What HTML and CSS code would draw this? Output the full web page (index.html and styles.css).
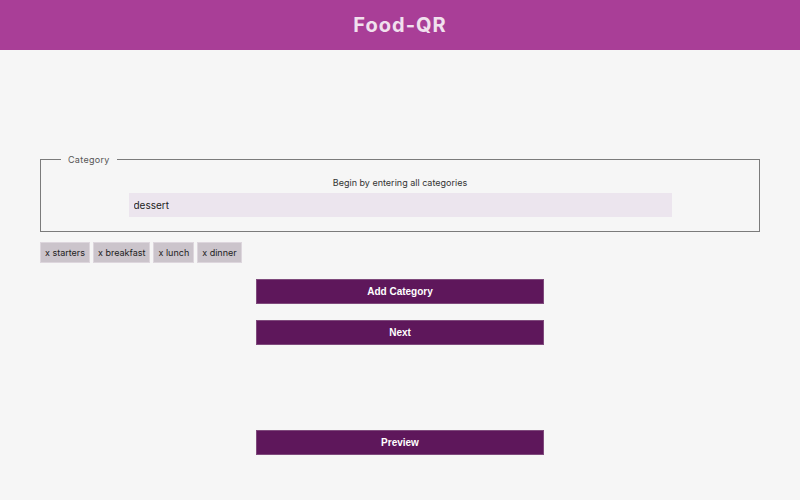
FILE: index.html
```html
<!DOCTYPE html>
<html>
<head>
<meta charset="utf-8">
<link rel="stylesheet" href="styles.css">
</head>
<body>
<header class="topbar"><h1 class="title">Food-QR</h1></header>
<main class="content">
  <fieldset class="category-box">
    <legend class="category-legend">Category</legend>
    <p class="hint">Begin by entering all categories</p>
    <input class="category-input" type="text" value="dessert">
  </fieldset>
  <div class="chips">
    <span class="chip">x starters</span>
    <span class="chip">x breakfast</span>
    <span class="chip">x lunch</span>
    <span class="chip">x dinner</span>
  </div>
  <div class="actions">
    <button class="btn">Add Category</button>
    <button class="btn">Next</button>
    <button class="btn btn-preview">Preview</button>
  </div>
</main>
</body>
</html>
```
FILE: styles.css
```css
html, body {
  margin: 0;
  padding: 0;
}
body {
  background: #f6f6f6;
  font-family: Inter, "Noto Sans", sans-serif;
  color: #333;
  width: 800px;
  height: 500px;
  overflow: hidden;
}
.topbar {
  height: 50px;
  background: #a93e97;
  display: flex;
  align-items: center;
  justify-content: center;
}
.title {
  margin: 0;
  font-size: 20px;
  font-weight: 700;
  letter-spacing: 1px;
  color: #f1e1ee;
}
.content {
  padding: 0 40px;
}
.category-box {
  margin: 104px 0 0;
  padding: 0 12px 14px;
  border: 1px solid #7b7b7b;
  text-align: center;
}
.category-legend {
  margin-left: 8px;
  padding: 0 7px;
  font-size: 9px;
  color: #555;
  text-align: left;
  letter-spacing: 0.3px;
}
.hint {
  margin: 12px 0 4px;
  font-size: 9px;
  line-height: 12px;
  color: #333;
}
.category-input {
  display: block;
  margin: 0 auto;
  width: 543px;
  height: 24px;
  box-sizing: border-box;
  border: none;
  background: #ece5ee;
  padding: 0 5px;
  font-family: Inter, "Noto Sans", sans-serif;
  font-size: 10px;
  color: #222;
  outline: none;
}
.chips {
  display: flex;
  gap: 3px;
  margin-top: 10px;
}
.chip {
  background: #cbc4cb;
  border: 1px solid #ddd6dd;
  height: 21px;
  box-sizing: border-box;
  padding: 0 4px;
  display: flex;
  align-items: center;
  font-size: 9px;
  color: #222;
}
.actions {
  display: flex;
  flex-direction: column;
  align-items: center;
  margin-top: 16px;
  gap: 16px;
}
.btn {
  width: 288px;
  height: 25px;
  background: #5e175b;
  border: 1px solid #7f4a7c;
  color: #fff;
  font-family: "Liberation Sans", Arial, sans-serif;
  font-weight: 700;
  font-size: 10px;
  padding: 0;
}
.btn-preview {
  margin-top: 69px;
}
```
